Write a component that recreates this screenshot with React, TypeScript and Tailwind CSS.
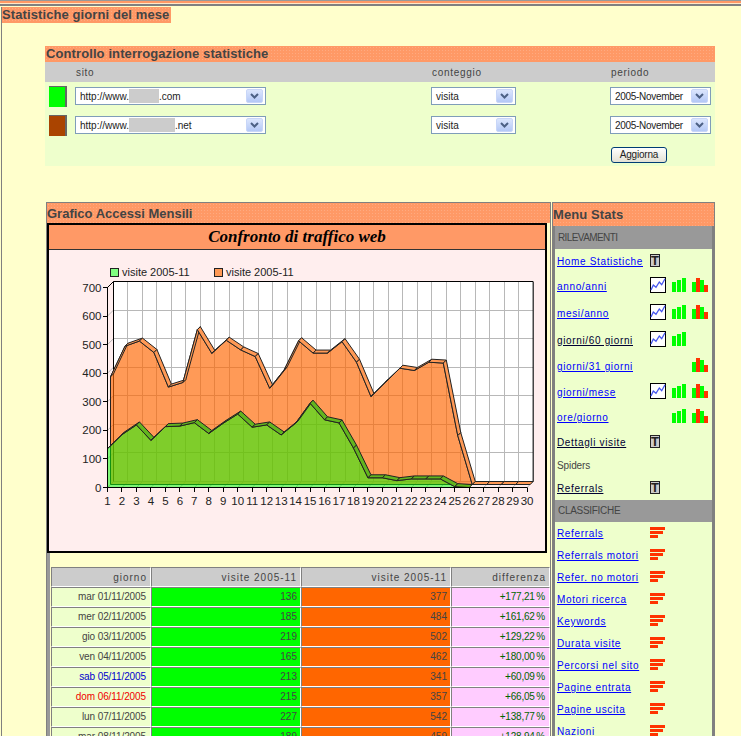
import React from "react";

const dots = "bg-[#ff9966] bg-[radial-gradient(circle,#ffaa80_1px,transparent_1px)] bg-[length:3px_3px]";
const heading = "font-bold text-[13px] leading-[16px] tracking-[0.1px] text-[#444444]";

function Chevron() {
  return (
    <div className="flex items-center justify-center w-[17px] h-[14px] rounded-[2px] bg-gradient-to-b from-[#dce6fd] to-[#b4c8f6] border border-[#c8d6f8]">
      <svg width="9" height="6" viewBox="0 0 9 6">
        <polyline points="1,1 4.5,4.5 8,1" fill="none" stroke="#4d6185" strokeWidth="2" />
      </svg>
    </div>
  );
}

function Select({ className, children }: { className: string; children: React.ReactNode }) {
  return (
    <div className={"flex items-center justify-between h-[18px] bg-white border border-[#7f9db9] pl-[4px] pr-[2px] text-[10px] text-[#222222] " + className}>
      <div className="flex items-center">{children}</div>
      <Chevron />
    </div>
  );
}

function Redacted({ className }: { className: string }) {
  return <span className={"inline-block h-[14px] bg-[#cccccc] " + className} />;
}

function Swatch({ className }: { className: string }) {
  return (
    <div className="w-[18px] h-[21px] bg-[#666666] flex items-end ml-[4px]">
      <div className={"w-[16px] h-[20px] " + className} />
    </div>
  );
}

function TIcon() {
  return (
    <div className="flex items-center justify-center w-[10px] h-[13px] border border-[#222222] bg-[#cccccc] text-[13px] leading-none font-bold text-[#222222]">
      T
    </div>
  );
}

function LineIcon() {
  return (
    <svg width="16" height="16" viewBox="0 0 16 16" className="block">
      <rect x="0.5" y="0.5" width="15" height="15" fill="#ffffff" stroke="#000000" />
      <polyline points="1,13 3.3,8 6,10.3 9.3,5 11.7,7.7 15,1.7" fill="none" stroke="#4455ee" strokeWidth="1.3" />
    </svg>
  );
}

function BarsIcon() {
  return (
    <svg width="14" height="14" viewBox="0 0 14 14" className="block">
      <rect x="0" y="4" width="4" height="10" fill="#00ff00" />
      <rect x="5" y="2" width="4" height="12" fill="#00ff00" />
      <rect x="10" y="0" width="4" height="14" fill="#00ff00" />
    </svg>
  );
}

function MixIcon() {
  return (
    <svg width="16" height="14" viewBox="0 0 16 14" className="block">
      <rect x="0" y="4" width="4" height="10" fill="#00ff00" />
      <rect x="4" y="0" width="4" height="14" fill="#ff3300" />
      <rect x="8" y="2" width="4" height="12" fill="#00ff00" />
      <rect x="12" y="7" width="4" height="7" fill="#ff3300" />
    </svg>
  );
}

function RankIcon() {
  return (
    <svg width="15" height="11" viewBox="0 0 15 11" className="block mb-px">
      <rect x="0" y="0" width="15" height="3" fill="#ff3300" />
      <rect x="0" y="4" width="13" height="3" fill="#ff3300" />
      <rect x="0" y="8" width="8" height="3" fill="#ff3300" />
    </svg>
  );
}

const linkClass = "text-[10px] leading-[12px] tracking-[0.65px] underline pt-[2px]";

const topRows = [
  { label: "Home Statistiche", h: "h-[24px]", color: "text-[#0000ff]", a: "t" },
  { label: "anno/anni", h: "h-[26px]", color: "text-[#0000ff]", a: "l", b: true, c: true },
  { label: "mesi/anno", h: "h-[27px]", color: "text-[#0000ff]", a: "l", b: true, c: true },
  { label: "giorni/60 giorni", h: "h-[27px]", color: "text-[#000033]", a: "l", b: true },
  { label: "giorni/31 giorni", h: "h-[26px]", color: "text-[#0000ff]", c: true },
  { label: "giorni/mese", h: "h-[25px]", color: "text-[#0000ff]", a: "l", b: true, c: true },
  { label: "ore/giorno", h: "h-[26px]", color: "text-[#0000ff]", b: true, c: true },
  { label: "Dettagli visite", h: "h-[24px]", color: "text-[#000033]", a: "t" },
  { label: "Spiders", h: "h-[22px]", color: "text-[#444444]", plain: true },
  { label: "Referrals", h: "h-[24px]", color: "text-[#000033]", a: "t" },
];

const rankRows = [
  "Referrals",
  "Referrals motori",
  "Refer. no motori",
  "Motori ricerca",
  "Keywords",
  "Durata visite",
  "Percorsi nel sito",
  "Pagine entrata",
  "Pagine uscita",
  "Nazioni",
];

const tableRows = [
  ["mar 01/11/2005", "136", "377", "+177,21 %", "text-[#444444]"],
  ["mer 02/11/2005", "185", "484", "+161,62 %", "text-[#444444]"],
  ["gio 03/11/2005", "219", "502", "+129,22 %", "text-[#444444]"],
  ["ven 04/11/2005", "165", "462", "+180,00 %", "text-[#444444]"],
  ["sab 05/11/2005", "213", "341", "+60,09 %", "text-[#0000cc]"],
  ["dom 06/11/2005", "215", "357", "+66,05 %", "text-[#ee0000]"],
  ["lun 07/11/2005", "227", "542", "+138,77 %", "text-[#444444]"],
  ["mar 08/11/2005", "189", "459", "+128,94 %", "text-[#444444]"],
];

const greenData = [136, 185, 219, 165, 213, 215, 227, 189, 225, 257, 211, 219, 184, 225, 295, 237, 226, 138, 34, 34, 24, 30, 30, 30, 3, 0];
const orangeData = [377, 484, 502, 462, 341, 357, 542, 459, 505, 471, 448, 337, 401, 503, 460, 460, 500, 428, 308, 358, 407, 399, 428, 425, 171, 0, 0, 0, 0, 0];

const X0 = 107.5;
const STEP = 14.47;
const Y0 = 487.5;
const K = 200 / 700;
const px = (i: number) => X0 + i * STEP;
const py = (v: number) => Y0 - v * K;

function facePoints(data: number[], off: number) {
  const top = data.map((v, i) => `${px(i) + off},${py(v) - off}`);
  const last = data.length - 1;
  return [`${px(0) + off},${Y0 - off}`, ...top, `${px(last) + off},${Y0 - off}`].join(" ");
}

function Ribbon({ data, off, fill }: { data: number[]; off: number; fill: string }) {
  const items = [];
  for (let i = 0; i < data.length - 1; i++) {
    const a = `${px(i) + off},${py(data[i]) - off}`;
    const b = `${px(i + 1) + off},${py(data[i + 1]) - off}`;
    const c = `${px(i + 1) + off + 3},${py(data[i + 1]) - off - 3}`;
    const d = `${px(i) + off + 3},${py(data[i]) - off - 3}`;
    items.push(<polygon key={i} points={`${a} ${b} ${c} ${d}`} fill={fill} stroke="#222222" strokeWidth="1" />);
  }
  return <g>{items}</g>;
}

function Chart() {
  const cols = Array.from({ length: 30 }, (_, i) => i);
  const levels = [0, 100, 200, 300, 400, 500, 600, 700];
  const fontFamily = "'Liberation Sans', Arial, sans-serif";
  return (
    <svg width="496" height="301" viewBox="49 250 496 301" className="block">
      <rect x="110.5" y="268.5" width="8" height="8" fill="#80ff80" stroke="#222222" />
      <text x="122" y="276" fontSize="11" fill="#222222" fontFamily={fontFamily}>visite 2005-11</text>
      <rect x="214.5" y="268.5" width="8" height="8" fill="#ff9955" stroke="#222222" />
      <text x="226" y="276" fontSize="11" fill="#222222" fontFamily={fontFamily}>visite 2005-11</text>

      <rect x={X0 + 6} y={Y0 - 206} width={29 * STEP} height={200} fill="#ffffff" />
      {cols.map((i) => (
        <g key={i}>
          <line x1={px(i) + 6} y1={Y0 - 206} x2={px(i) + 6} y2={Y0 - 6} stroke="#b8b8b8" shapeRendering="crispEdges" />
          <line x1={px(i)} y1={Y0} x2={px(i) + 6} y2={Y0 - 6} stroke="#b8b8b8" />
          <line x1={px(i)} y1={Y0} x2={px(i)} y2={Y0 + 4} stroke="#000000" shapeRendering="crispEdges" />
          <text x={px(i)} y={Y0 + 17} fontSize="11.5" textAnchor="middle" fill="#222222" fontFamily={fontFamily}>{i + 1}</text>
        </g>
      ))}
      {levels.map((v) => (
        <g key={v}>
          <line x1={X0 + 6} y1={py(v) - 6} x2={px(29) + 6} y2={py(v) - 6} stroke="#b8b8b8" shapeRendering="crispEdges" />
          <line x1={X0} y1={py(v)} x2={X0 + 6} y2={py(v) - 6} stroke="#b8b8b8" />
          <line x1={X0 - 5} y1={py(v)} x2={X0} y2={py(v)} stroke="#000000" shapeRendering="crispEdges" />
          <text x={X0 - 6} y={py(v) + 4} fontSize="11.5" textAnchor="end" fill="#222222" fontFamily={fontFamily}>{v}</text>
        </g>
      ))}
      <polyline
        points={`${X0},${Y0 - 200} ${X0 + 6},${Y0 - 206} ${px(29) + 6},${Y0 - 206} ${px(29) + 6},${Y0 - 6}`}
        fill="none"
        stroke="#000000"
      />
      <line x1={X0 + 6} y1={Y0 - 206} x2={X0 + 6} y2={Y0 - 6} stroke="#000000" />

      <polygon points={facePoints(orangeData, 3)} fill="#ff6600" fillOpacity="0.66" stroke="#222222" strokeWidth="1" />
      <Ribbon data={orangeData} off={3} fill="#ff9955" />
      <polygon points={facePoints(greenData, 0)} fill="#00ff00" fillOpacity="0.5" stroke="#222222" strokeWidth="1" />
      <Ribbon data={greenData} off={0} fill="#62b51e" />

      <line x1={X0} y1={Y0 - 200} x2={X0} y2={Y0} stroke="#000000" />
      <line x1={X0 - 0.5} y1={Y0} x2={px(29) + 0.5} y2={Y0} stroke="#000000" />
    </svg>
  );
}

const cell = "h-[20px] border border-[#808080] border-r-white border-b-white ";

export default function App() {
  return (
    <div className="w-[741px] h-[736px] overflow-hidden bg-[#ffffcc] font-['Liberation_Sans',Arial,sans-serif]">
      <div className="h-px bg-[#999999]" />
      <div className="h-[2px] bg-[#ff9966]" />
      <div className="h-px bg-[#ffe8c8]" />
      <div className="h-[2px] bg-[#808080]" />
      <div className="h-px bg-[#ffffcc]" />

      <div className="ml-px border-l border-[#808080] h-[729px]">
        <div className={"w-[169px] h-[16px] whitespace-nowrap " + dots + " " + heading}>Statistiche giorni del mese</div>

        <div className="mt-[23px] ml-[43px] w-[670px]">
          <div className={"h-[16px] pl-px whitespace-nowrap " + dots + " " + heading}>Controllo interrogazione statistiche</div>
          <div className="grid grid-cols-[31px_356px_179px_104px] items-center h-[20px] bg-[#cccccc] text-[10px] tracking-[0.7px] text-[#444444]">
            <div />
            <div>sito</div>
            <div>conteggio</div>
            <div>periodo</div>
          </div>
          <div className="h-[84px] bg-[#eeffcc] pt-[3px]">
            <div className="grid grid-cols-[30px_356px_179px_105px] items-center h-[22px]">
              <Swatch className="bg-[#00ff00]" />
              <Select className="w-[191px]">
                <span>http://www.</span>
                <Redacted className="w-[30px]" />
                <span>.com</span>
              </Select>
              <Select className="w-[85px]"><span>visita</span></Select>
              <Select className="w-[101px]"><span className="tracking-[-0.3px]">2005-November</span></Select>
            </div>
            <div className="mt-[7px] grid grid-cols-[30px_356px_179px_105px] items-center h-[22px]">
              <Swatch className="bg-[#aa4400]" />
              <Select className="w-[191px]">
                <span>http://www.</span>
                <Redacted className="w-[46px]" />
                <span>.net</span>
              </Select>
              <Select className="w-[85px]"><span>visita</span></Select>
              <Select className="w-[101px]"><span className="tracking-[-0.3px]">2005-November</span></Select>
            </div>
            <div className="mt-[11px] pl-[566px]">
              <button className="block w-[56px] h-[16px] rounded-[3px] border border-[#003c74] bg-gradient-to-b from-white to-[#e4e1d4] text-[10px] leading-[14px] tracking-[-0.2px] text-[#222222]">
                Aggiorna
              </button>
            </div>
          </div>
        </div>

        <div className="mt-[36px] ml-[44px] flex items-start">
          <div className="w-[505px] h-[534px] border-t border-l border-r border-[#808080] flex flex-col">
            <div className={"h-[20px] whitespace-nowrap leading-[21px] " + dots + " font-bold text-[13px] text-[#444444]"}>Grafico Accessi Mensili</div>
            <div className="w-[500px] h-[330px] border-2 border-black bg-[#ffeeee] flex flex-col">
              <div className="flex items-center justify-center h-[25px] shrink-0 bg-[#ff9966] border-b border-[#333333] font-['Liberation_Serif',serif] italic font-bold text-[17px] text-black">
                Confronto di traffico web
              </div>
              <Chart />
            </div>
            <div className="flex-1 border-l-[3px] border-[#999999] pt-[14px] pl-px">
              <div className="grid grid-cols-[100px_150px_150px_99px] text-[10px] text-right">
                {["giorno", "visite 2005-11", "visite 2005-11", "differenza"].map((t, i) => (
                  <div key={i} className={cell + "leading-[19px] pr-[3px] bg-[#cccccc] tracking-[1px] text-[#444444]"}>{t}</div>
                ))}
                {tableRows.map((r) => (
                  <React.Fragment key={r[0]}>
                    <div className={cell + "leading-[17px] pr-[4px] tracking-[-0.1px] bg-[#eeffcc] " + r[4]}>{r[0]}</div>
                    <div className={cell + "leading-[17px] pr-[3px] bg-[#00ff00] text-[#444444]"}>{r[1]}</div>
                    <div className={cell + "leading-[17px] pr-[3px] bg-[#ff6600] text-[#444444]"}>{r[2]}</div>
                    <div className={cell + "leading-[17px] pr-[4px] bg-[#ffccff] tracking-[-0.2px] [word-spacing:-1px] text-[#006600]"}>{r[3]}</div>
                  </React.Fragment>
                ))}
              </div>
            </div>
          </div>

          <div className="ml-px w-[163px] h-[534px] border-t border-l border-r border-[#808080] flex flex-col">
            <div className={"h-[23px] whitespace-nowrap leading-[23px] " + dots + " font-bold text-[13px] tracking-[0.1px] text-[#444444]"}>Menu Stats</div>
            <div className="flex-1 border-l-2 border-r-2 border-[#808080] bg-[#eeffcc]">
              <div className="h-[23px] pl-[3px] leading-[23px] bg-[#999999] text-[10px] tracking-[-0.6px] text-[#444444]">RILEVAMENTI</div>
              {topRows.map((r) => (
                <div key={r.label} className={"flex items-center " + r.h}>
                  <div className={"w-[95px] pl-[2px] whitespace-nowrap " + r.color + " " + (r.plain ? "text-[10px] tracking-[-0.1px]" : linkClass)}>{r.label}</div>
                  <div className="w-[22px] mb-[2px]">
                    {r.a === "t" ? <TIcon /> : r.a === "l" ? <LineIcon /> : null}
                  </div>
                  <div className="w-[20px] mb-[2px]">{r.b ? <BarsIcon /> : null}</div>
                  <div className="mb-[2px]">{r.c ? <MixIcon /> : null}</div>
                </div>
              ))}
              <div className="h-[22px] pl-[3px] leading-[22px] bg-[#999999] text-[10px] tracking-[-0.3px] text-[#444444]">CLASSIFICHE</div>
              {rankRows.map((label) => (
                <div key={label} className="flex items-center h-[22px]">
                  <div className={"w-[95px] pl-[2px] whitespace-nowrap text-[#0000ff] " + linkClass}>{label}</div>
                  <RankIcon />
                </div>
              ))}
            </div>
          </div>
        </div>
      </div>
    </div>
  );
}
